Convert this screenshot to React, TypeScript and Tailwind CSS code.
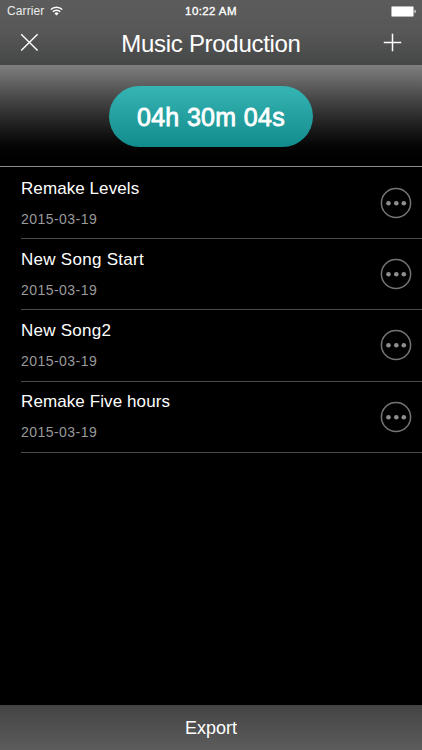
type Track = {
  name: string;
  date: string;
  tracking: string;
};

const TRACKS: Track[] = [
  { name: "Remake Levels", date: "2015-03-19", tracking: "tracking-[0.08px]" },
  { name: "New Song Start", date: "2015-03-19", tracking: "tracking-[0.28px]" },
  { name: "New Song2", date: "2015-03-19", tracking: "tracking-[0.25px]" },
  { name: "Remake Five hours", date: "2015-03-19", tracking: "tracking-[0.1px]" },
];

function WifiIcon() {
  return (
    <svg width="13" height="10" viewBox="0 0 13 10" fill="none" stroke="#fff" strokeWidth="1.5">
      <path d="M0.8 3.5a8.1 8.1 0 0 1 11.4 0" />
      <path d="M2.8 5.7a5.2 5.2 0 0 1 7.4 0" />
      <path d="M6.5 9.5 4.4 7.4a3 3 0 0 1 4.2 0Z" fill="#fff" stroke="none" />
    </svg>
  );
}

function BatteryIcon() {
  return (
    <svg width="26" height="11" viewBox="0 0 26 11">
      <rect x="0.5" y="0.5" width="22" height="10" rx="1" fill="#fff" stroke="#b5b5b5" />
      <path d="M23.5 3.8c1.8.2 1.8 3.2 0 3.4Z" fill="#e5e5e5" />
    </svg>
  );
}

function StatusBar() {
  return (
    <div className="grid h-[22px] grid-cols-3 items-center pl-[7px] pr-[5px] text-white">
      <div className="flex items-center gap-[6px]">
        <span className="text-[12px] leading-[22px] tracking-[0.1px] text-[#ececec]">Carrier</span>
        <WifiIcon />
      </div>
      <span className="pr-[2px] text-center text-[11.5px] leading-[22px] tracking-[0.4px] [-webkit-text-stroke:0.35px_#fff]">
        10:22 AM
      </span>
      <div className="flex justify-end">
        <BatteryIcon />
      </div>
    </div>
  );
}

function NavBar() {
  return (
    <div className="flex h-[43px] items-center justify-between px-5">
      <button type="button" aria-label="Close" className="flex h-10 items-center pb-[3px]">
        <svg width="19" height="19" viewBox="0 0 19 19" stroke="#fff" strokeWidth="1.4">
          <path d="M1.2 1.2 17.6 17.6M17.6 1.2 1.2 17.6" />
        </svg>
      </button>
      <h1 className="pt-[1px] text-[24px] leading-[42px] tracking-[-0.3px] text-white">Music Production</h1>
      <button type="button" aria-label="Add" className="flex h-10 items-center pb-[3px]">
        <svg width="19" height="19" viewBox="0 0 19 19" stroke="#fff" strokeWidth="1.5">
          <path d="M9.5 0.8v17.4M0.8 9.5h17.4" />
        </svg>
      </button>
    </div>
  );
}

function MoreButton() {
  return (
    <button type="button" aria-label="More">
      <svg width="32" height="32" viewBox="0 0 32 32" fill="#8e8e8e">
        <circle cx="16" cy="16" r="14.6" fill="none" stroke="#757575" strokeWidth="1.5" />
        <circle cx="8.5" cy="16.2" r="2.3" />
        <circle cx="16.3" cy="16.2" r="2.3" />
        <circle cx="23.8" cy="16.2" r="2.3" />
      </svg>
    </button>
  );
}

function TrackRow({ track }: { track: Track }) {
  return (
    <li className="ml-[21px] flex h-[71.2px] items-center justify-between border-b border-[#4c4c4c] pr-[10px]">
      <div>
        <p className={`pt-[1px] text-[17px] leading-[30px] text-white ${track.tracking}`}>{track.name}</p>
        <p className="text-[14px] leading-[30px] tracking-[0.45px] text-[#9a9a9a]">{track.date}</p>
      </div>
      <MoreButton />
    </li>
  );
}

export default function App() {
  return (
    <div className="flex h-screen w-full flex-col overflow-hidden bg-black font-['Liberation_Sans',Arial,sans-serif]">
      <header className="h-[65px] shrink-0 bg-linear-to-b from-[#5c5c5c] via-[#575757] to-[#454646]">
        <StatusBar />
        <NavBar />
      </header>

      <section className="flex h-[102px] shrink-0 items-center justify-center border-b border-[#8c8c8c] bg-linear-to-b from-[#808080] to-black pt-[2px]">
        <div className="flex h-[61px] w-[204px] items-center justify-center rounded-full bg-linear-to-b from-[#36b4b4] to-[#108c8c] pt-[2px]">
          <span className="text-[25px] tracking-[0.33px] text-white [-webkit-text-stroke:0.8px_#fff]">04h 30m 04s</span>
        </div>
      </section>

      <ul className="flex-1 pt-[1px]">
        {TRACKS.map((track) => (
          <TrackRow key={track.name} track={track} />
        ))}
      </ul>

      <button
        type="button"
        className="h-[45px] shrink-0 bg-linear-to-b from-[#444] to-[#5c5c5c] pt-[1px] text-[18px] text-white"
      >
        Export
      </button>
    </div>
  );
}
